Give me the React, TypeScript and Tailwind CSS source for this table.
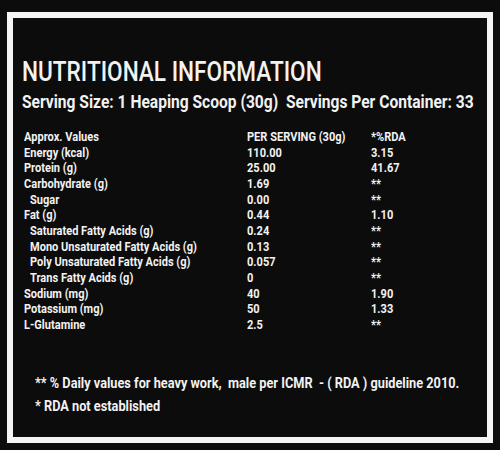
const rows: [string, string, string, boolean][] = [
  ["Approx. Values", "PER SERVING (30g)", "*%RDA", false],
  ["Energy (kcal)", "110.00", "3.15", false],
  ["Protein (g)", "25.00", "41.67", false],
  ["Carbohydrate (g)", "1.69", "**", false],
  ["Sugar", "0.00", "**", true],
  ["Fat (g)", "0.44", "1.10", false],
  ["Saturated Fatty Acids (g)", "0.24", "**", true],
  ["Mono Unsaturated Fatty Acids (g)", "0.13", "**", true],
  ["Poly Unsaturated Fatty Acids (g)", "0.057", "**", true],
  ["Trans Fatty Acids (g)", "0", "**", true],
  ["Sodium (mg)", "40", "1.90", false],
  ["Potassium (mg)", "50", "1.33", false],
  ["L-Glutamine", "2.5", "**", false],
];

// condensed face is missing, so squeeze Roboto horizontally
const narrow = "inline-block origin-left scale-x-[0.85]";

export default function App() {
  return (
    <div className="h-[450px] w-[500px] overflow-hidden whitespace-nowrap bg-[#0c0c0c] px-[7px] pt-3 font-['Roboto',sans-serif] text-[#f2f2f2]">
      <div className="h-[431px] overflow-hidden border-[6px] border-[#f4f4f4] pl-[9px] pt-[39px]">
        <h1 className="h-[30px] text-[27px] font-medium leading-[30px]">
          <span className="inline-block origin-left scale-x-[0.837]">NUTRITIONAL INFORMATION</span>
        </h1>
        <p className="mt-[4px] h-[22px] text-[19px] font-bold leading-[22px]">
          <span className="inline-block origin-left scale-x-[0.82]">
            Serving Size: 1 Heaping Scoop (30g)&nbsp; Servings Per Container: 33
          </span>
        </p>
        <div className="mt-[16px] pl-[2px] text-[13px] font-bold leading-[15.67px]">
          {rows.map(([label, value, rda, sub]) => (
            <div key={label} className="grid h-[15.67px] grid-cols-[223px_124px_1fr]">
              <span className={sub ? "pl-[6px]" : ""}>
                <span className={narrow}>{label}</span>
              </span>
              <span>
                <span className={narrow}>{value}</span>
              </span>
              <span>
                <span className={narrow}>{rda}</span>
              </span>
            </div>
          ))}
        </div>
        <div className="mt-[39px] pl-[13px] text-[15px] font-bold leading-[23.5px]">
          <p className="h-[23.5px]">
            <span className="inline-block origin-left scale-x-[0.85]">
              ** % Daily values for heavy work,&nbsp; male per ICMR&nbsp; - ( RDA ) guideline 2010.
            </span>
          </p>
          <p className="h-[23.5px]">
            <span className="inline-block origin-left scale-x-[0.85]">* RDA not established</span>
          </p>
        </div>
      </div>
    </div>
  );
}
